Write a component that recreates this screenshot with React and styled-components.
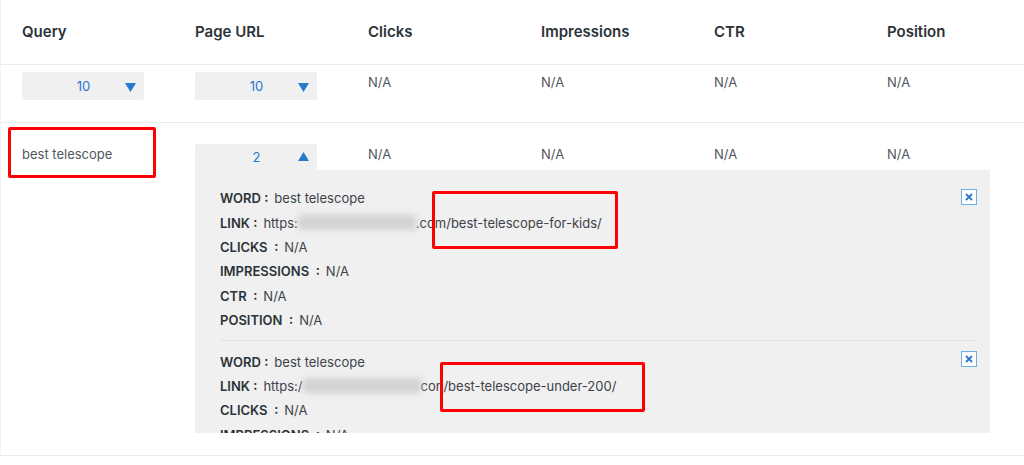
import styled, { createGlobalStyle } from "styled-components";

const GlobalStyle = createGlobalStyle`
  body {
    margin: 0;
    background: #fff;
    font-family: Inter, "Liberation Sans", Arial, sans-serif;
    color: #50575e;
    overflow: hidden;
  }
`;

const columns = ["Query", "Page URL", "Clicks", "Impressions", "CTR", "Position"];

const details = [
  {
    word: "best telescope",
    prefix: "https:",
    rest: ".com/best-telescope-for-kids/",
    mark: { left: 212, top: 5, width: 186, height: 58 },
  },
  {
    word: "best telescope",
    prefix: "https:/",
    rest: "con/best-telescope-under-200/",
    mark: { left: 220, top: 21, width: 205, height: 50 },
  },
];

const Caret = ({ up }) => (
  <svg width="11" height="9" viewBox="0 0 11 9">
    <path d={up ? "M5.5 0 L11 9 L0 9 Z" : "M0 0 L11 0 L5.5 9 Z"} fill="#2679cc" />
  </svg>
);

const CloseIcon = () => (
  <svg width="8" height="8" viewBox="0 0 8 8">
    <path d="M1 1 L7 7 M7 1 L1 7" stroke="#2679cc" strokeWidth="1.8" />
  </svg>
);

const App = () => {
  return (
    <>
      <GlobalStyle />
      <Table>
        <HeadRow>
          {columns.map((c) => (
            <HeadCell key={c}>{c}</HeadCell>
          ))}
        </HeadRow>

        <Row>
          <Cell>
            <Select>
              <SelectValue>10</SelectValue>
              <Caret />
            </Select>
          </Cell>
          <Cell>
            <Select>
              <SelectValue>10</SelectValue>
              <Caret />
            </Select>
          </Cell>
          {[0, 1, 2, 3].map((i) => (
            <TextCell key={i}>N/A</TextCell>
          ))}
        </Row>

        <ExpandedRow>
          <QueryCell>
            best telescope
            <Mark style={{ left: 7, top: 4, width: 148, height: 51 }} />
          </QueryCell>
          <Cell>
            <Select open>
              <SelectValue>2</SelectValue>
              <Caret up />
            </Select>
          </Cell>
          {[0, 1, 2, 3].map((i) => (
            <QueryCell key={i}>N/A</QueryCell>
          ))}
          <Panel>
            {details.map((d, i) => (
              <Group key={i} divided={i > 0}>
                <Line>
                  <Label>WORD :</Label>
                  <Value>{d.word}</Value>
                </Line>
                <Line>
                  <Label>LINK :</Label>
                  <Value>
                    {d.prefix}
                    <Blur />
                    {d.rest}
                  </Value>
                </Line>
                <Line>
                  <Label>CLICKS&nbsp; :</Label>
                  <Value>N/A</Value>
                </Line>
                <Line>
                  <Label>IMPRESSIONS&nbsp; :</Label>
                  <Value>N/A</Value>
                </Line>
                <Line>
                  <Label>CTR&nbsp; :</Label>
                  <Value>N/A</Value>
                </Line>
                <Line>
                  <Label>POSITION&nbsp; :</Label>
                  <Value>N/A</Value>
                </Line>
                <CloseButton divided={i > 0}>
                  <CloseIcon />
                </CloseButton>
                <Mark style={d.mark} />
              </Group>
            ))}
          </Panel>
        </ExpandedRow>
      </Table>
    </>
  );
};

export default App;

const Table = styled.div`
  width: 1038px;
  border-left: 1px solid #f3f3f3;
  border-bottom: 1px solid #ebebeb;
`;

const HeadRow = styled.div`
  display: grid;
  grid-template-columns: repeat(6, 173px);
  height: 64px;
  border-bottom: 1px solid #ececec;
  align-items: center;
`;

const HeadCell = styled.div`
  padding-left: 21px;
  padding-bottom: 1px;
  font-size: 15px;
  font-weight: 600;
  color: #2c3338;
`;

const Row = styled.div`
  display: grid;
  grid-template-columns: repeat(6, 173px);
  height: 57px;
  border-bottom: 1px solid #ececec;
  align-items: start;
`;

const Cell = styled.div`
  padding-left: 21px;
  padding-top: 7px;
`;

const TextCell = styled.div`
  padding-left: 21px;
  padding-top: 9px;
  font-size: 13px;
  line-height: 16px;
`;

const Select = styled.div`
  width: 122px;
  height: ${(p) => (p.open ? "26px" : "28px")};
  margin-top: ${(p) => (p.open ? "14px" : "0")};
  box-sizing: border-box;
  background: #f0f0f0;
  border-radius: ${(p) => (p.open ? "2px 2px 0 0" : "3px")};
  display: flex;
  align-items: center;
  padding: 0 8px 0 0;
  svg {
    flex: none;
    margin-top: ${(p) => (p.open ? "-1px" : "2px")};
  }
`;

const SelectValue = styled.span`
  flex: 1;
  text-align: center;
  padding-left: 20px;
  font-size: 13px;
  color: #2679cc;
`;

const ExpandedRow = styled.div`
  display: grid;
  grid-template-columns: repeat(6, 173px);
  grid-template-rows: auto auto;
  padding-bottom: 22px;
`;

const QueryCell = styled.div`
  position: relative;
  padding-left: 21px;
  padding-top: 23px;
  font-size: 13px;
  line-height: 16px;
`;

const Panel = styled.div`
  grid-column: 2 / 7;
  margin-left: 21px;
  width: 795px;
  height: 263px;
  box-sizing: border-box;
  background: #f0f0f0;
  overflow: hidden;
  padding: 16px 12px 0 25px;
`;

const Group = styled.div`
  position: relative;
  ${(p) =>
    p.divided &&
    `
    border-top: 1px solid #e2e2e2;
    margin-top: 8px;
    padding-top: 8px;
  `}
`;

const Line = styled.div`
  display: flex;
  align-items: center;
  height: 24.4px;
  font-size: 13px;
  color: #3c434a;
  white-space: nowrap;
`;

const Label = styled.span`
  font-weight: 600;
  color: #2c3338;
  margin-right: 6px;
`;

const Value = styled.span`
  display: inline-flex;
  align-items: center;
`;

const Blur = styled.span`
  display: inline-block;
  width: 118px;
  height: 15px;
  background: #d2d2d2;
  filter: blur(3px);
`;

const CloseButton = styled.div`
  position: absolute;
  right: 1px;
  top: ${(p) => (p.divided ? "10px" : "3px")};
  width: 16px;
  height: 16px;
  box-sizing: border-box;
  background: #fff;
  border: 1px solid #72aee6;
  display: flex;
  align-items: center;
  justify-content: center;
`;

const Mark = styled.div`
  position: absolute;
  box-sizing: border-box;
  border: 3px solid #f00;
  border-radius: 2px;
  pointer-events: none;
`;
